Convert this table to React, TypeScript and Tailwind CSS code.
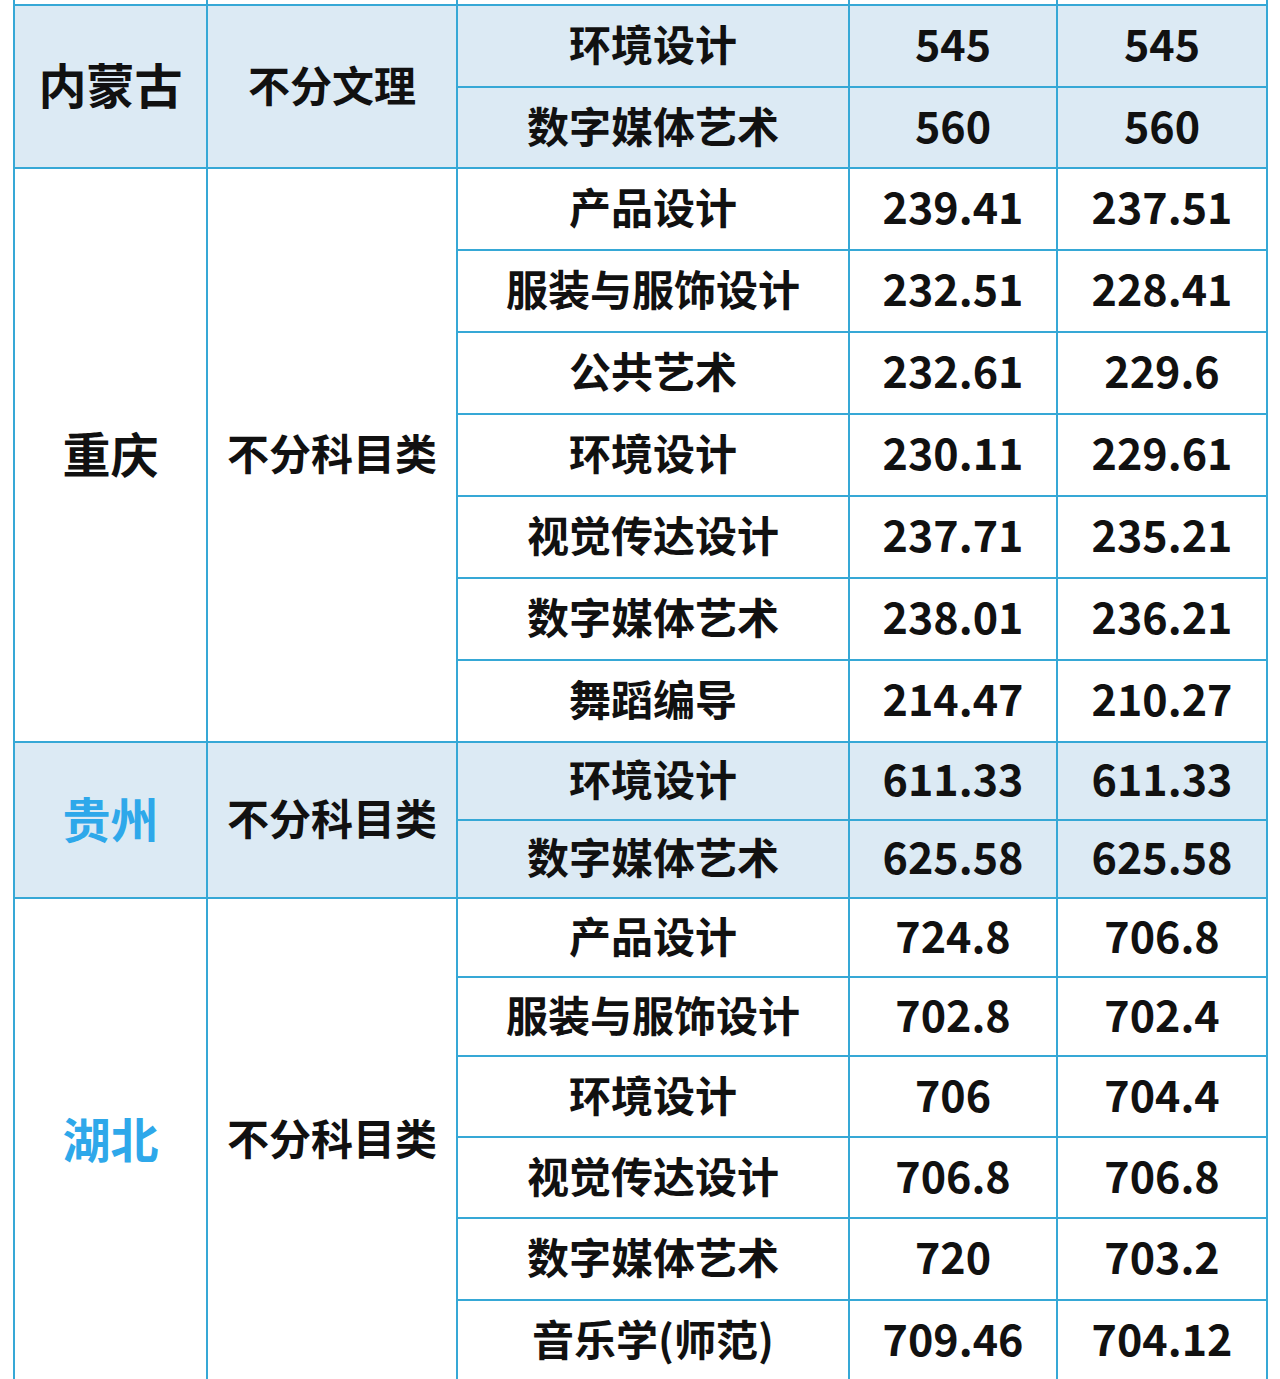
const font = { fontFamily: '"Noto Sans CJK SC", "Noto Sans", sans-serif' }

type Row = { major: string; a: string; b: string; h: number }
type Group = { prov: string; type: string; blue?: boolean; shaded?: boolean; rows: Row[] }

const GROUPS: Group[] = [
  {
    prov: '内蒙古',
    type: '不分文理',
    shaded: true,
    rows: [
      { major: '环境设计', a: '545', b: '545', h: 82 },
      { major: '数字媒体艺术', a: '560', b: '560', h: 81 },
    ],
  },
  {
    prov: '重庆',
    type: '不分科目类',
    rows: [
      { major: '产品设计', a: '239.41', b: '237.51', h: 82 },
      { major: '服装与服饰设计', a: '232.51', b: '228.41', h: 82 },
      { major: '公共艺术', a: '232.61', b: '229.6', h: 82 },
      { major: '环境设计', a: '230.11', b: '229.61', h: 82 },
      { major: '视觉传达设计', a: '237.71', b: '235.21', h: 82 },
      { major: '数字媒体艺术', a: '238.01', b: '236.21', h: 82 },
      { major: '舞蹈编导', a: '214.47', b: '210.27', h: 82 },
    ],
  },
  {
    prov: '贵州',
    type: '不分科目类',
    blue: true,
    shaded: true,
    rows: [
      { major: '环境设计', a: '611.33', b: '611.33', h: 78 },
      { major: '数字媒体艺术', a: '625.58', b: '625.58', h: 78 },
    ],
  },
  {
    prov: '湖北',
    type: '不分科目类',
    blue: true,
    rows: [
      { major: '产品设计', a: '724.8', b: '706.8', h: 79 },
      { major: '服装与服饰设计', a: '702.8', b: '702.4', h: 79 },
      { major: '环境设计', a: '706', b: '704.4', h: 81 },
      { major: '视觉传达设计', a: '706.8', b: '706.8', h: 81 },
      { major: '数字媒体艺术', a: '720', b: '703.2', h: 82 },
      { major: '音乐学(师范)', a: '709.46', b: '704.12', h: 82 },
    ],
  },
]

// 텍스트가 셀 안에서 살짝 위쪽에 오도록 아래 패딩
const cell = 'border-2 border-[#36a8d6] text-center align-middle px-0 pt-0 pb-[7px]'

export default function App() {
  return (
    <div className="w-[1280px] h-[1379px] overflow-hidden bg-white" style={font}>
      <table className="table-fixed border-collapse ml-[13px] w-[1253px] text-[#111111] font-bold">
        <colgroup>
          <col className="w-[193px]" />
          <col className="w-[250px]" />
          <col className="w-[392px]" />
          <col className="w-[208px]" />
          <col className="w-[210px]" />
        </colgroup>
        <tbody>
          <tr className="h-[5px]">
            {[0, 1, 2, 3, 4].map((i) => (
              <td key={i} className="border-x-2 border-b-2 border-t-0 border-[#36a8d6] p-0" />
            ))}
          </tr>
          {GROUPS.map((g) =>
            g.rows.map((r, i) => (
              <tr
                key={g.prov + r.major}
                className={g.shaded ? 'bg-[#dceaf4]' : 'bg-white'}
                style={{ height: r.h }}
              >
                {i === 0 && (
                  <>
                    <td
                      rowSpan={g.rows.length}
                      className={`${cell} text-[48px] ${g.blue ? 'text-[#2ea8ea]' : ''}`}
                    >
                      {g.prov}
                    </td>
                    <td rowSpan={g.rows.length} className={`${cell} text-[42px]`}>
                      {g.type}
                    </td>
                  </>
                )}
                <td className={`${cell} text-[42px]`}>{r.major}</td>
                <td className={`${cell} text-[43px]`}>{r.a}</td>
                <td className={`${cell} text-[43px]`}>{r.b}</td>
              </tr>
            ))
          )}
        </tbody>
      </table>
    </div>
  )
}
